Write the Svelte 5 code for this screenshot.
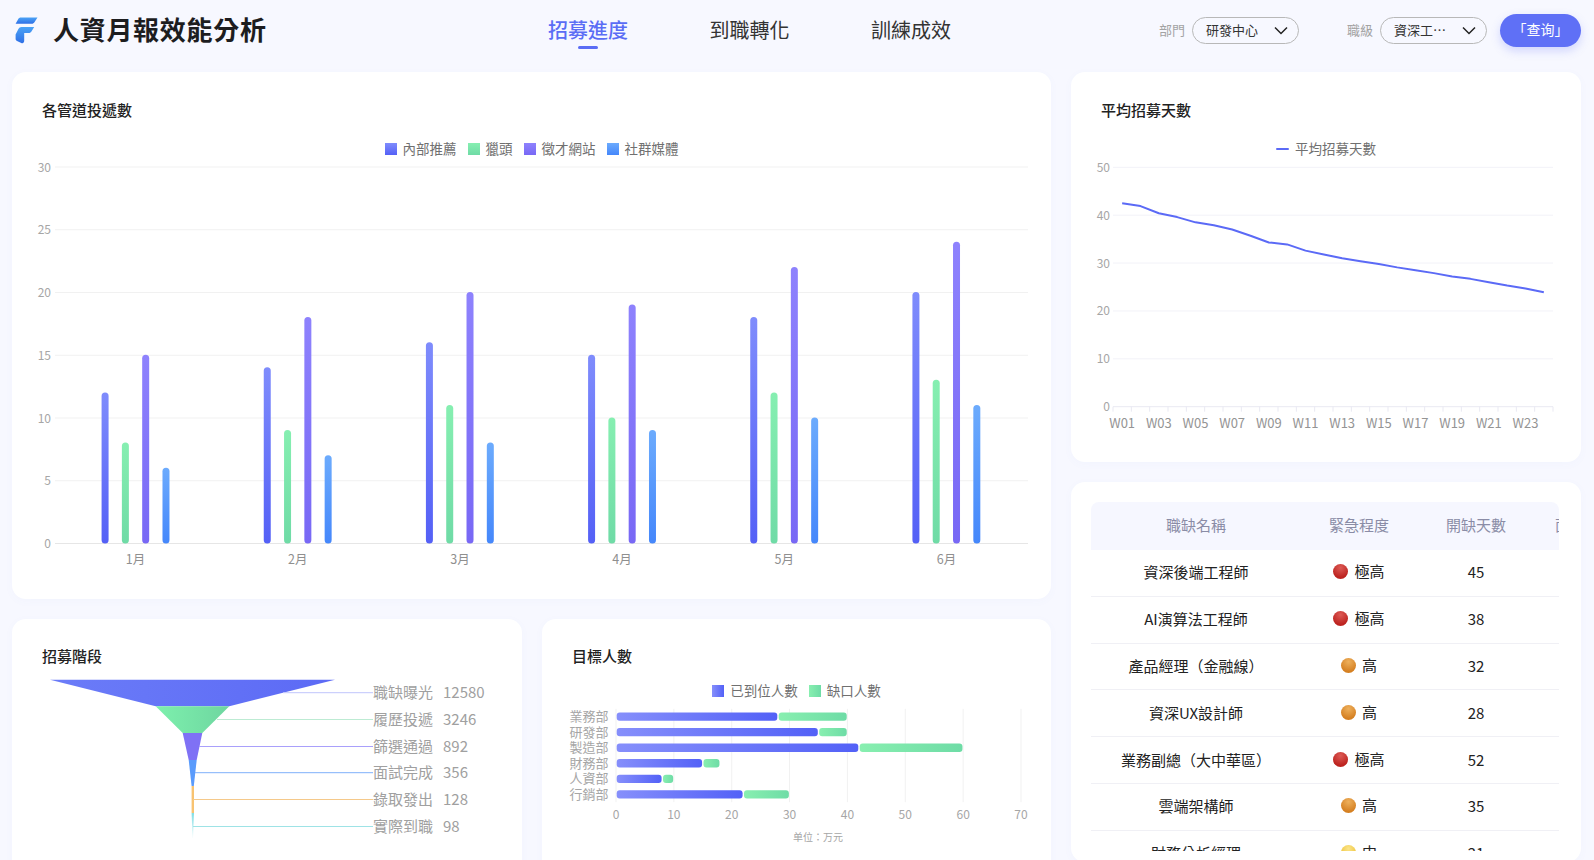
<script lang="ts">
  const tabs = ["招募進度", "到職轉化", "訓練成效"];

  // 各管道投遞數
  const channels = [
    { name: "內部推薦", cls: "sq-indigo", fill: "url(#g-indigo)", values: [12, 14, 16, 15, 18, 20] },
    { name: "獵頭", cls: "sq-green", fill: "url(#g-green)", values: [8, 9, 11, 10, 12, 13] },
    { name: "徵才網站", cls: "sq-purple", fill: "url(#g-purple)", values: [15, 18, 20, 19, 22, 24] },
    { name: "社群媒體", cls: "sq-blue", fill: "url(#g-blue)", values: [6, 7, 8, 9, 10, 11] },
  ];
  const months = ["1月", "2月", "3月", "4月", "5月", "6月"];
  const barLeft = 55;
  const barRight = 1028;
  const barBand = (barRight - barLeft) / 6;
  const barZero = 543.5;
  const barUnit = (543.5 - 167) / 30;

  // 平均招募天數
  const days = [
    42.5, 41.9, 40.4, 39.6, 38.5, 37.9, 37, 35.7, 34.3, 33.9, 32.6, 31.8, 31,
    30.4, 29.8, 29.1, 28.5, 27.9, 27.2, 26.7, 26, 25.3, 24.7, 23.9,
  ];
  const lineLeft = 1113;
  const lineRight = 1553;
  const lineBand = (lineRight - lineLeft) / 24;
  const lineZero = 406.7;
  const lineUnit = (406.7 - 167.3) / 50;
  const linePoints = days
    .map((d, i) => `${lineLeft + lineBand * (i + 0.5)},${lineZero - d * lineUnit}`)
    .join(" ");

  // 招募階段
  const stages = [
    { name: "職缺曝光", value: 12580, y: 692.7, from: 283, line: "#c0c6fc", fill: "url(#f-indigo)",
      shape: "50,679.8 335,679.8 229.3,706.2 155.7,706.2" },
    { name: "履歷投遞", value: 3246, y: 719.5, from: 217, line: "#bdebd3", fill: "url(#f-green)",
      shape: "155.7,706.2 229.3,706.2 202.3,733 182.7,733" },
    { name: "篩選通過", value: 892, y: 746.5, from: 199, line: "#a9a0fb", fill: "#7f71f5",
      shape: "182.7,733 202.3,733 196.7,760 188.7,760" },
    { name: "面試完成", value: 356, y: 772.7, from: 195, line: "#7fb0fb", fill: "#5a9bfc",
      shape: "188.7,760 196.7,760 193.8,786 191.6,786" },
    { name: "錄取發出", value: 128, y: 799.5, from: 193, line: "#f5c98a", fill: "#f8c371",
      shape: "191.6,786 194,786 194,813 191.6,813" },
    { name: "實際到職", value: 98, y: 826.5, from: 193, line: "#9ee3e6", fill: "url(#f-cyan)",
      shape: "191.6,813 194,813 193,838 192.6,838" },
  ];

  // 目標人數
  const depts = [
    { name: "業務部", done: 28, gap: 12 },
    { name: "研發部", done: 35, gap: 5 },
    { name: "製造部", done: 42, gap: 18 },
    { name: "財務部", done: 15, gap: 3 },
    { name: "人資部", done: 8, gap: 2 },
    { name: "行銷部", done: 22, gap: 8 },
  ];
  const hLeft = 616;
  const hUnit = (1021 - 616) / 70;
  const hTop = 708.8;
  const hBand = (802.2 - 708.8) / 6;

  const jobs = [
    { name: "資深後端工程師", level: "極高", dot: "red", days: 45 },
    { name: "AI演算法工程師", level: "極高", dot: "red", days: 38 },
    { name: "產品經理（金融線）", level: "高", dot: "orange", days: 32 },
    { name: "資深UX設計師", level: "高", dot: "orange", days: 28 },
    { name: "業務副總（大中華區）", level: "極高", dot: "red", days: 52 },
    { name: "雲端架構師", level: "高", dot: "orange", days: 35 },
    { name: "財務分析經理", level: "中", dot: "yellow", days: 21 },
  ];
</script>

<div class="page">
  <header class="topbar">
    <div class="brand">
      <svg class="logo" width="24" height="28" viewBox="15 15 24 28" aria-hidden="true">
        <defs>
          <linearGradient id="logo-a" x1="0" y1="0" x2="0" y2="1">
            <stop offset="0" stop-color="#4ba3f6" />
            <stop offset="1" stop-color="#2f6fe6" />
          </linearGradient>
        </defs>
        <path d="M21 16.5H37.5L34.6 21C33.9 22.2 33 22.8 31.6 22.8H15.6L18 18.4C18.7 17.1 19.6 16.5 21 16.5Z" fill="url(#logo-a)" />
        <path d="M21.5 26H34.2L31.6 30.2C30.9 31.4 30 32 28.6 32H24.2V39.8C24.2 41.6 23 42.6 21.8 42.2L17 39.9C16 39.4 15.6 38.7 15.6 37.7V33.6L18.4 28C19.1 26.7 20 26 21.5 26Z" fill="url(#logo-a)" />
      </svg>
      <h1>人資月報效能分析</h1>
    </div>
    <nav class="tabs">
      {#each tabs as tab, i}
        <span class="tab" class:active={i === 0}>{tab}</span>
      {/each}
    </nav>
    <div class="filters">
      <span class="filter-label">部門</span>
      <div class="select">
        <span>研發中心</span>
        <svg width="14" height="9" viewBox="0 0 14 9"><path d="M1 1.5L7 7.5L13 1.5" /></svg>
      </div>
      <span class="filter-label second">職級</span>
      <div class="select">
        <span>資深工…</span>
        <svg width="14" height="9" viewBox="0 0 14 9"><path d="M1 1.5L7 7.5L13 1.5" /></svg>
      </div>
      <button class="query">「查询」</button>
    </div>
  </header>

  <main class="board">
    <div class="left">
      <section class="card">
        <h2>各管道投遞數</h2>
        <div class="legend">
          {#each channels as c}
            <span class="legend-item"><i class="sq {c.cls}"></i><span class="legend-text">{c.name}</span></span>
          {/each}
        </div>
        <svg class="chart" width="1039" height="440" viewBox="12 159 1039 440" role="img" aria-label="各管道投遞數">
          <defs>
            <linearGradient id="g-indigo" x1="0" y1="0" x2="0" y2="1">
              <stop offset="0" stop-color="#7f8cfc" /><stop offset="1" stop-color="#5460f6" />
            </linearGradient>
            <linearGradient id="g-green" x1="0" y1="0" x2="0" y2="1">
              <stop offset="0" stop-color="#86efb1" /><stop offset="1" stop-color="#6fdba6" />
            </linearGradient>
            <linearGradient id="g-purple" x1="0" y1="0" x2="0" y2="1">
              <stop offset="0" stop-color="#8e82fd" /><stop offset="1" stop-color="#7868f5" />
            </linearGradient>
            <linearGradient id="g-blue" x1="0" y1="0" x2="0" y2="1">
              <stop offset="0" stop-color="#6cabfd" /><stop offset="1" stop-color="#4587fb" />
            </linearGradient>
          </defs>
          {#each [0, 5, 10, 15, 20, 25, 30] as t}
            {@const y = barZero - t * barUnit}
            <line x1={barLeft} x2={barRight} y1={y} y2={y} class={t === 0 ? "axis" : "grid"} />
            <text x="51" {y} class="tick-label" text-anchor="end" dominant-baseline="central">{t}</text>
          {/each}
          {#each months as m, i}
            {@const cx = barLeft + barBand * (i + 0.5)}
            <text x={cx - 0.5} y="559.5" class="tick-label month" text-anchor="middle" dominant-baseline="central">{m}</text>
            {#each channels as c, j}
              {@const h = c.values[i] * barUnit}
              <rect x={cx - 34.5 + j * 20.3} y={barZero - h - 0.5} width="7" height={h + 0.5} rx="3.5" fill={c.fill} />
            {/each}
          {/each}
        </svg>
      </section>

      <div class="lower">
        <section class="card">
          <h2>招募階段</h2>
          <svg class="chart" width="510" height="194" viewBox="12 666 510 194" role="img" aria-label="招募階段">
            <defs>
              <linearGradient id="f-indigo" x1="0" y1="0" x2="1" y2="0">
                <stop offset="0" stop-color="#6b7cf8" /><stop offset="1" stop-color="#5c6af5" />
              </linearGradient>
              <linearGradient id="f-green" x1="0" y1="0" x2="1" y2="0">
                <stop offset="0" stop-color="#7df0ad" /><stop offset="1" stop-color="#6ed6a0" />
              </linearGradient>
              <linearGradient id="f-cyan" x1="0" y1="0" x2="0" y2="1">
                <stop offset="0" stop-color="#7fdde4" /><stop offset="1" stop-color="#7fdde4" stop-opacity="0.1" />
              </linearGradient>
            </defs>
            {#each stages as s}
              <polygon points={s.shape} fill={s.fill} />
            {/each}
            {#each stages as s}
              <line x1={s.from} x2="373" y1={s.y} y2={s.y} stroke={s.line} stroke-width="1" />
              <text x="373" y={s.y} class="stage-label" dominant-baseline="central">{s.name}</text>
              <text x="443" y={s.y} class="stage-label" dominant-baseline="central">{s.value}</text>
            {/each}
          </svg>
        </section>

        <section class="card">
          <h2>目標人數</h2>
          <div class="legend tight">
            <span class="legend-item"><i class="sq sq-indigo-h"></i><span class="legend-text">已到位人數</span></span>
            <span class="legend-item"><i class="sq sq-green-h"></i><span class="legend-text">缺口人數</span></span>
          </div>
          <svg class="chart" width="509" height="159" viewBox="542 701 509 159" role="img" aria-label="目標人數">
            <defs>
              <linearGradient id="h-indigo" x1="0" y1="0" x2="1" y2="0">
                <stop offset="0" stop-color="#868ffb" /><stop offset="1" stop-color="#5361f7" />
              </linearGradient>
              <linearGradient id="h-green" x1="0" y1="0" x2="1" y2="0">
                <stop offset="0" stop-color="#88efb0" /><stop offset="1" stop-color="#6edca6" />
              </linearGradient>
            </defs>
            {#each [0, 10, 20, 30, 40, 50, 60, 70] as t}
              {@const x = hLeft + t * hUnit}
              <line x1={x} x2={x} y1={hTop} y2="802.2" class="grid" />
              <text {x} y="814" class="tick-label" text-anchor="middle" dominant-baseline="central">{t}</text>
            {/each}
            {#each depts as d, i}
              {@const cy = hTop + hBand * (i + 0.5)}
              <text x="608.5" y={cy} class="dept-label" text-anchor="end" dominant-baseline="central">{d.name}</text>
              <rect x={hLeft + 0.7} y={cy - 4.2} width={d.done * hUnit - 1.4} height="8.4" rx="3" fill="url(#h-indigo)" />
              <rect x={hLeft + d.done * hUnit + 0.7} y={cy - 4.2} width={d.gap * hUnit - 1.4} height="8.4" rx="3" fill="url(#h-green)" />
            {/each}
            <text x="818" y="836" class="unit-label" text-anchor="middle" dominant-baseline="central">单位：万元</text>
          </svg>
        </section>
      </div>
    </div>

    <div class="right">
      <section class="card">
        <h2>平均招募天數</h2>
        <div class="legend">
          <span class="legend-item"><i class="dash"></i><span class="legend-text">平均招募天數</span></span>
        </div>
        <svg class="chart" width="510" height="303" viewBox="1071 159 510 303" role="img" aria-label="平均招募天數">
          {#each [0, 10, 20, 30, 40, 50] as t}
            {@const y = lineZero - t * lineUnit}
            <line x1={lineLeft} x2={lineRight} y1={y} y2={y} class={t === 0 ? "axis-soft" : "grid-soft"} />
            <text x="1110" {y} class="tick-label" text-anchor="end" dominant-baseline="central">{t}</text>
          {/each}
          {#each days as _, i}
            {@const x = lineLeft + lineBand * i}
            <line x1={x} x2={x} y1={lineZero} y2={lineZero + 5} class="axis-soft" />
            {#if i % 2 === 0}
              <text x={x + lineBand / 2} y="423" class="tick-label week" text-anchor="middle" dominant-baseline="central">W{String(i + 1).padStart(2, "0")}</text>
            {/if}
          {/each}
          <line x1={lineRight} x2={lineRight} y1={lineZero} y2={lineZero + 5} class="axis-soft" />
          <polyline points={linePoints} class="trend" />
        </svg>
      </section>

      <section class="card table-card">
        <div class="table-wrap">
          <table>
            <colgroup>
              <col style="width: 210px" />
              <col style="width: 116px" />
              <col style="width: 118px" />
              <col style="width: 100px" />
            </colgroup>
            <thead>
              <tr>
                <th>職缺名稱</th>
                <th>緊急程度</th>
                <th>開缺天數</th>
                <th>面試人數</th>
              </tr>
            </thead>
            <tbody>
              {#each jobs as job}
                <tr>
                  <td>{job.name}</td>
                  <td><span class="level"><i class="dot {job.dot}"></i>{job.level}</span></td>
                  <td>{job.days}</td>
                  <td></td>
                </tr>
              {/each}
            </tbody>
          </table>
        </div>
      </section>
    </div>
  </main>
</div>

<style>
  :global(body) {
    margin: 0;
    background: #f7f8ff;
    overflow: hidden;
  }

  .page {
    width: 1594px;
    height: 860px;
    overflow: hidden;
    font-family: "Noto Sans CJK TC", "Noto Sans", sans-serif;
    color: #222;
  }

  .topbar {
    height: 72px;
    box-sizing: border-box;
    padding: 0 13px 12px 15px;
    display: flex;
    align-items: center;
  }

  .brand {
    flex: 0 0 533px;
    display: flex;
    align-items: center;
    gap: 14px;
  }

  .logo {
    display: block;
  }

  h1 {
    margin: -2px 0 0;
    font-size: 26px;
    line-height: 36px;
    font-weight: 700;
    letter-spacing: 0.7px;
    color: #1d1d1f;
  }

  .tabs {
    display: flex;
    gap: 81.5px;
  }

  .tab {
    position: relative;
    font-size: 20px;
    line-height: 30px;
    color: #333;
  }

  .tab.active {
    color: #5b6df5;
    font-weight: 500;
  }

  .tab.active::after {
    content: "";
    position: absolute;
    left: 30px;
    bottom: -4px;
    width: 20px;
    height: 3px;
    border-radius: 2px;
    background: #5b6df5;
  }

  .filters {
    margin-left: auto;
    display: flex;
    align-items: center;
    gap: 7px;
  }

  .filter-label {
    margin-top: -2px;
    font-size: 13px;
    color: #a3a3a3;
  }

  .filter-label.second {
    margin-left: 41px;
  }

  .select {
    width: 107px;
    height: 27px;
    box-sizing: border-box;
    padding: 0 10px 0 13px;
    border: 1px solid #b8b8b8;
    border-radius: 14px;
    display: flex;
    align-items: center;
    justify-content: space-between;
    font-size: 13px;
    color: #333;
  }

  .select span {
    margin-top: -2px;
  }

  .select svg {
    fill: none;
    stroke: #222;
    stroke-width: 1.5;
  }

  .query {
    width: 81px;
    height: 33px;
    margin-left: 6px;
    padding: 0 0 2px;
    border: 0;
    border-radius: 17px;
    background: #5f70f6;
    box-shadow: 0 4px 10px rgba(95, 112, 246, 0.25);
    color: #fff;
    font: inherit;
    font-size: 14px;
  }

  .board {
    display: grid;
    grid-template-columns: 1039px 510px;
    gap: 20px;
    padding-left: 12px;
  }

  .left,
  .right {
    display: flex;
    flex-direction: column;
    gap: 20px;
    min-width: 0;
  }

  .lower {
    display: grid;
    grid-template-columns: 510px 509px;
    gap: 20px;
  }

  .card {
    background: #fff;
    border-radius: 14px;
    box-shadow: 0 2px 10px rgba(110, 120, 220, 0.03);
    overflow: hidden;
  }

  .lower .card {
    height: 300px;
  }

  h2 {
    margin: 0;
    padding: 28px 30px 0;
    font-size: 15px;
    line-height: 20px;
    font-weight: 500;
    color: #222;
  }

  .lower h2 {
    padding-top: 27px;
  }

  .legend {
    height: 20px;
    margin-top: 19px;
    display: flex;
    justify-content: center;
    gap: 11px;
  }

  .legend.tight {
    margin-top: 15px;
  }

  .legend-item {
    display: flex;
    align-items: center;
    gap: 6px;
    font-size: 13.5px;
    line-height: 20px;
    color: #707070;
  }

  .legend-text {
    margin-top: -2px;
  }

  .sq {
    width: 12px;
    height: 12px;
  }

  .sq-indigo {
    background: linear-gradient(#7f8cfc, #5460f6);
  }

  .sq-green {
    background: linear-gradient(#86efb1, #6fdba6);
  }

  .sq-purple {
    background: linear-gradient(#8e82fd, #7868f5);
  }

  .sq-blue {
    background: linear-gradient(#6cabfd, #4587fb);
  }

  .sq-indigo-h {
    background: linear-gradient(90deg, #868ffb, #5361f7);
  }

  .sq-green-h {
    background: linear-gradient(90deg, #88efb0, #6edca6);
  }

  .dash {
    width: 13px;
    height: 2px;
    border-radius: 1px;
    background: #5b6af6;
  }

  .chart {
    display: block;
  }

  .grid {
    stroke: #f1f1f1;
    stroke-width: 1;
  }

  .axis {
    stroke: #e6e6e6;
    stroke-width: 1;
  }

  .grid-soft {
    stroke: #f2f2f8;
    stroke-width: 1;
  }

  .axis-soft {
    stroke: #e9e9f2;
    stroke-width: 1;
  }

  .tick-label {
    fill: #a6a6a6;
    font-size: 12px;
    transform: translateY(-1px);
  }

  .month {
    fill: #8f8f8f;
    font-size: 12.5px;
  }

  .week {
    fill: #949494;
    font-size: 13px;
  }

  .trend {
    fill: none;
    stroke: #5b6af6;
    stroke-width: 2;
    stroke-linejoin: round;
  }

  .stage-label {
    fill: #a0a0a0;
    font-size: 15px;
    transform: translateY(-1px);
  }

  .dept-label {
    fill: #a6a6a6;
    font-size: 13px;
    transform: translateY(-1px);
  }

  .unit-label {
    fill: #a6a6a6;
    font-size: 10px;
  }

  .table-card {
    height: 380px;
    padding: 20px 0 0 20px;
    box-sizing: border-box;
  }

  .table-wrap {
    width: 468px;
    height: 349px;
    overflow: hidden;
    border-radius: 8px 8px 0 0;
  }

  table {
    width: 544px;
    table-layout: fixed;
    border-collapse: separate;
    border-spacing: 0;
    text-align: center;
    font-size: 15px;
  }

  th {
    height: 48px;
    padding: 0 0 3px;
    box-sizing: border-box;
    background: #f6f7ff;
    font-weight: 400;
    color: #8a8ca6;
  }

  td {
    height: 46.8px;
    box-sizing: border-box;
    padding: 0 0 2px;
    border-bottom: 1px solid #f0f0f5;
    color: #222;
    white-space: nowrap;
  }

  .level {
    display: inline-flex;
    align-items: center;
    gap: 6px;
  }

  .dot {
    width: 15px;
    height: 15px;
    margin-top: 2px;
    border-radius: 50%;
  }

  .dot.red {
    background: radial-gradient(circle at 50% 25%, #dd5a55, #bd2420 70%);
  }

  .dot.orange {
    background: radial-gradient(circle at 50% 25%, #eeb05c, #d58022 72%);
  }

  .dot.yellow {
    background: radial-gradient(circle at 50% 25%, #fbe58a, #eec238 72%);
  }
</style>
